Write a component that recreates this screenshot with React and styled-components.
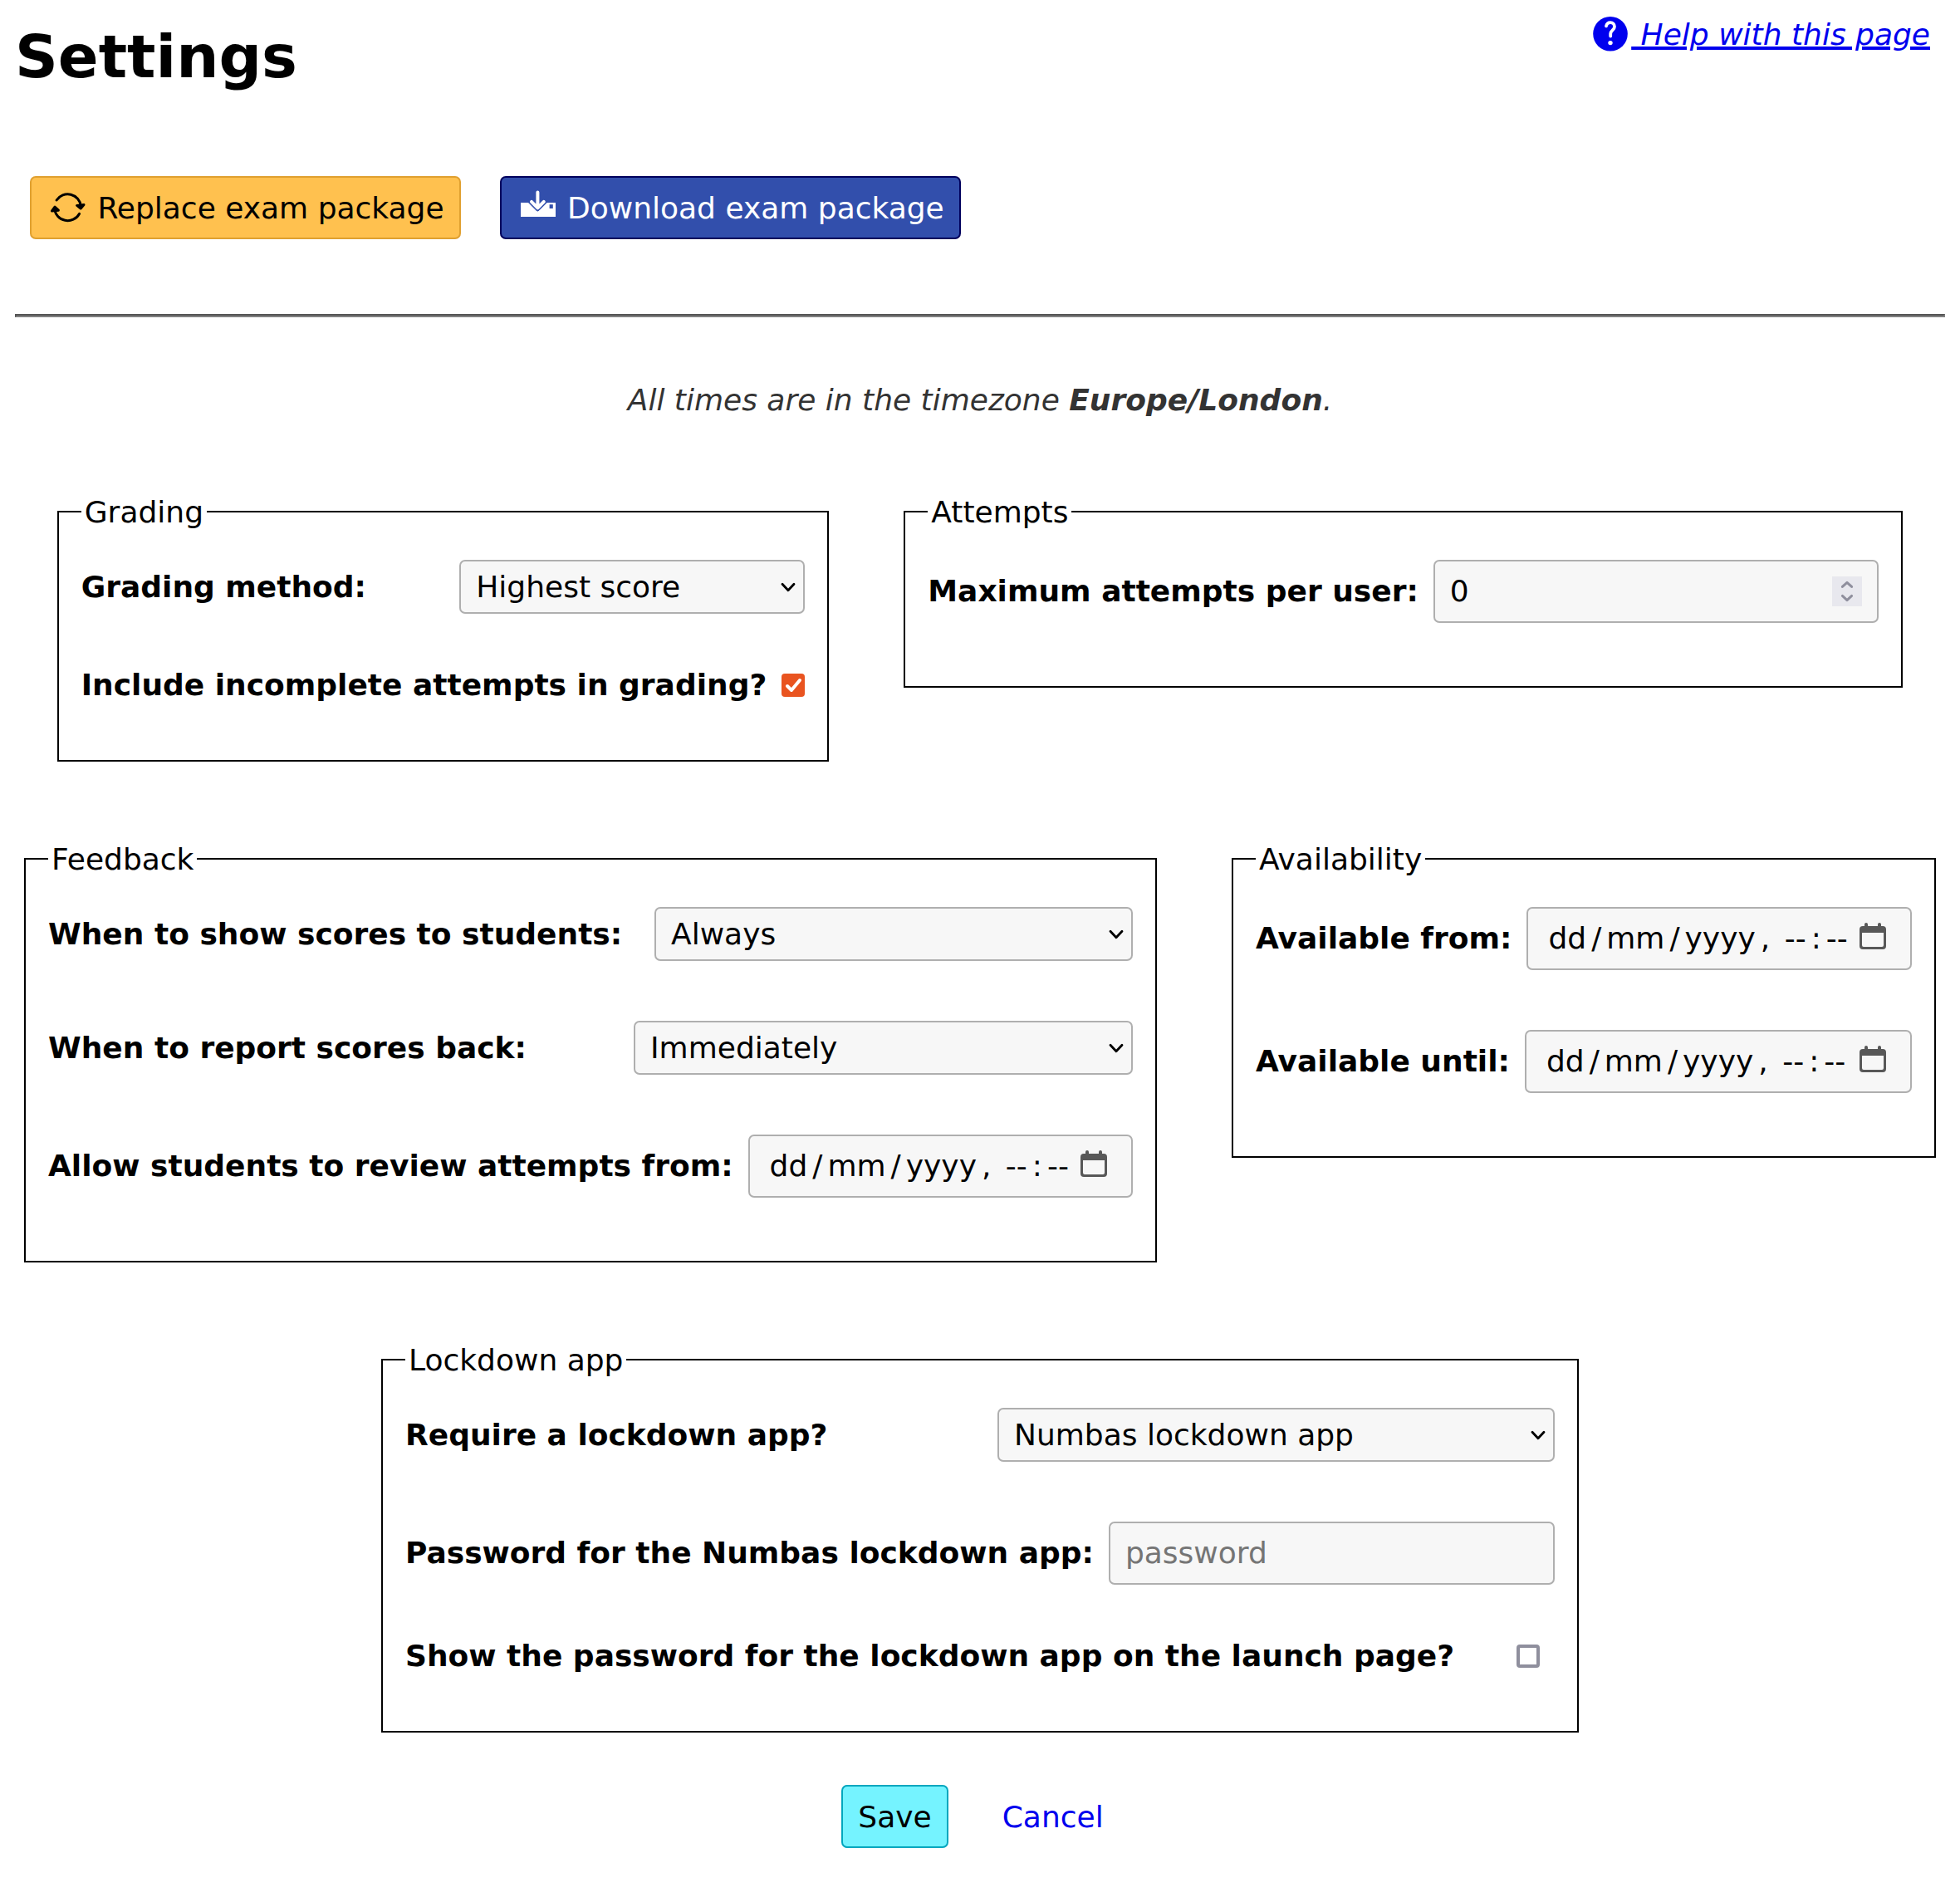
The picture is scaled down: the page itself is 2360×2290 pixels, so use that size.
import React from "react";
import styled, { createGlobalStyle } from "styled-components";

const GlobalStyle = createGlobalStyle`
  body {
    margin: 0;
    background: #fff;
    color: #000;
    font: 36px "DejaVu Sans", Verdana, sans-serif;
    line-height: 42px;
  }
  * { box-sizing: border-box; }
`;

const Page = styled.main`
  width: 2360px;
  height: 2290px;
  padding: 0 18px;
  display: flex;
  flex-direction: column;
`;

const Header = styled.header`
  display: flex;
  justify-content: space-between;
  align-items: flex-start;
  padding-right: 18px;
`;

const Title = styled.h1`
  margin: 26px 0 0;
  font-size: 72px;
  line-height: 84px;
`;

const HelpLink = styled.a`
  margin-top: 20px;
  display: flex;
  align-items: flex-start;
  gap: 4px;
  color: #0000ee;
  font-style: italic;
`;

const HelpText = styled.span`
  padding-top: 1px;
  white-space: pre;
  text-decoration: underline;
  text-decoration-thickness: 4px;
  text-underline-offset: 2px;
`;

const Toolbar = styled.nav`
  display: flex;
  gap: 47px;
  margin: 102px 18px 0;
`;

const tones = {
  warning: { fg: "#000", bg: "#ffc14f", edge: "#e0a030" },
  primary: { fg: "#fff", bg: "#324fac", edge: "#00005c" },
  save: { fg: "#000", bg: "#75f3ff", edge: "#00a6be" },
};

const Button = styled.button`
  height: 76px;
  padding: 1px 18px 0;
  display: flex;
  align-items: center;
  gap: 11.4px;
  font: inherit;
  white-space: nowrap;
  color: ${(p) => tones[p.$tone].fg};
  background: ${(p) => tones[p.$tone].bg};
  border: 2px solid ${(p) => tones[p.$tone].edge};
  border-radius: 7px;
`;

const ButtonIcon = styled.svg`
  display: block;
  width: 50px;
  height: 42px;
  margin-bottom: 1px;
  fill: none;
  stroke-linecap: round;
  stroke-linejoin: round;
`;

const Divider = styled.hr`
  width: 100%;
  height: 4px;
  margin: 90px 0 0;
  border: 2px solid #555;
  border-bottom-color: #808080;
  border-right-color: #808080;
`;

const Timezone = styled.p`
  margin: 79px 0 0;
  text-align: center;
  font-style: italic;
  color: #333;
`;

const Form = styled.form`
  display: flex;
  flex-direction: column;
  gap: 95px;
  margin: 91px -18px 0;
`;

const Group = styled.div`
  display: flex;
  justify-content: center;
  align-items: flex-start;
  gap: 90px;
`;

const Fieldset = styled.fieldset`
  width: ${(p) => p.$width}px;
  margin: 0;
  padding: 36px 27px 76px;
  border: 2px solid #000;
`;

const Legend = styled.legend`
  padding: 2px 4px 0;
`;

const Rows = styled.div`
  display: flex;
  flex-direction: column;
  gap: 72px;
`;

const Row = styled.div`
  display: flex;
  align-items: center;
  justify-content: space-between;
  gap: 18px;
`;

const Label = styled.label`
  font-weight: bold;
  line-height: 28px;
  white-space: nowrap;
`;

const Control = styled.div`
  display: flex;
  align-items: center;
  justify-content: space-between;
  background: #f7f7f7;
  border: 2px solid #afafaf;
  border-radius: 7px;
`;

const SelectBox = styled(Control)`
  width: ${(p) => p.$width}px;
  height: 65px;
  padding: 0 9px 0 18px;
`;

const TextBox = styled(Control)`
  flex: 1;
  min-width: 0;
  height: 76px;
  padding: 0 18px;
`;

const TextInput = styled.input`
  flex: 1;
  min-width: 0;
  padding: 0;
  border: 0;
  outline: 0;
  background: transparent;
  color: #000;
  font: inherit;
  &::placeholder { color: #757575; opacity: 1; }
`;

const Spinner = styled.span`
  width: 36px;
  height: 36px;
  background: #e8e8ee;
  display: flex;
`;

const DateBox = styled(Control)`
  flex: 1;
  height: 76px;
  padding: 0 29px 0 24px;
`;

const DateParts = styled.span`
  display: flex;
  gap: 6px;
  white-space: pre;
`;

const CalendarIcon = styled.svg`
  display: block;
  margin-bottom: 6px;
`;

const Checkbox = styled.span`
  width: 28px;
  height: 28px;
  margin-right: ${(p) => (p.$checked ? 0 : 18)}px;
  display: flex;
  border-radius: 4px;
  background: ${(p) => (p.$checked ? "#e95420" : "#fff")};
  border: ${(p) => (p.$checked ? "0" : "4px solid #8f8f9d")};
`;

const Actions = styled.div`
  display: flex;
  justify-content: center;
  align-items: center;
  gap: 47px;
  margin-top: 63px;
`;

const CancelLink = styled.a`
  padding: 1px 18px 0;
  color: #0000ee;
  text-decoration: none;
`;

const Select = ({ width, children }) => (
  <SelectBox $width={width} role="combobox">
    <span>{children}</span>
    <svg width="18" height="14" viewBox="0 0 18 14" fill="none">
      <path d="M2 3.2 L9 10.8 L16 3.2" stroke="#000" strokeWidth="2.8" strokeLinecap="round" strokeLinejoin="round" />
    </svg>
  </SelectBox>
);

const DateTime = () => (
  <DateBox>
    <DateParts>
      {["dd", "/", "mm", "/", "yyyy", ", ", "--", ":", "--"].map((part, i) => (
        <span key={i}>{part}</span>
      ))}
    </DateParts>
    <CalendarIcon width="32" height="32" viewBox="0 0 32 32">
      <path
        fill="#585858"
        fillRule="evenodd"
        d="M6 4V2a2 2 0 0 1 4 0V4H22V2a2 2 0 0 1 4 0V4H28a4 4 0 0 1 4 4V28a4 4 0 0 1-4 4H4a4 4 0 0 1-4-4V8a4 4 0 0 1 4-4ZM3 12V27a2 2 0 0 0 2 2H27a2 2 0 0 0 2-2V12Z"
      />
    </CalendarIcon>
  </DateBox>
);

const Section = ({ title, width, children }) => (
  <Fieldset $width={width}>
    <Legend>{title}</Legend>
    <Rows>{children}</Rows>
  </Fieldset>
);

const Field = ({ label, children }) => (
  <Row>
    <Label>{label}</Label>
    {children}
  </Row>
);

const HelpIcon = () => (
  <svg width="42" height="42" viewBox="0 0 42 42" fill="none">
    <circle cx="21" cy="20.8" r="20.8" fill="#0000ee" />
    <path d="M16 11.4C16.7 8.3 18.6 7.1 21 7.1C24 7.1 26 9.2 26 12C26 16.2 21.4 16.6 21.2 20.6V23.6" stroke="#fff" strokeWidth="3.8" strokeLinecap="round" />
    <circle cx="21" cy="31.6" r="2.7" fill="#fff" />
  </svg>
);

const ReplaceIcon = () => (
  <ButtonIcon viewBox="0 0 50 42" stroke="#000" strokeWidth="3">
    <path d="M12.1 12A16 16 0 0 1 41.4 19" />
    <path d="M9.6 22.4A16 16 0 0 0 39.5 28.4" />
    <path d="M36.6 18.4L45 17.6L41.2 22Z" fill="#000" />
    <path d="M6.5 25L14.4 24.2L10 20.2Z" fill="#000" />
  </ButtonIcon>
);

const DownloadIcon = () => (
  <ButtonIcon viewBox="0 0 50 42">
    <path d="M5 15H47V32H5Z" fill="#fff" />
    <path d="M13.8 14.2L24 24.4Q25.4 25.8 26.8 24.4L37 14.2Z" fill="#324fac" stroke="#324fac" strokeWidth="1" />
    <path d="M25.4 2.6V20.6M18 13.9L25.4 21.4L32.8 13.9" stroke="#fff" strokeWidth="4" />
    <path d="M39.6 17.2H43.8V22H39.6Z" fill="#324fac" />
  </ButtonIcon>
);

export default function App() {
  return (
    <Page>
      <GlobalStyle />
      <Header>
        <Title>Settings</Title>
        <HelpLink>
          <HelpIcon />
          <HelpText> Help with this page</HelpText>
        </HelpLink>
      </Header>

      <Toolbar>
        <Button $tone="warning">
          <ReplaceIcon />
          Replace exam package
        </Button>
        <Button $tone="primary">
          <DownloadIcon />
          Download exam package
        </Button>
      </Toolbar>

      <Divider />

      <Timezone>
        All times are in the timezone <strong>Europe/London</strong>.
      </Timezone>

      <Form>
        <Group>
          <Section title="Grading" width={929}>
            <Field label="Grading method:">
              <Select width={416}>Highest score</Select>
            </Field>
            <Field label="Include incomplete attempts in grading?">
              <Checkbox $checked role="checkbox">
                <svg width="28" height="28" viewBox="0 0 28 28" fill="none">
                  <path d="M7 15L12 20L22 8" stroke="#fff" strokeWidth="4" strokeLinecap="round" strokeLinejoin="round" />
                </svg>
              </Checkbox>
            </Field>
          </Section>
          <Section title="Attempts" width={1203}>
            <Field label="Maximum attempts per user:">
              <TextBox>
                <TextInput defaultValue="0" />
                <Spinner>
                  <svg width="36" height="36" viewBox="0 0 36 36" fill="none" stroke="#8f8f9d" strokeWidth="3" strokeLinecap="round" strokeLinejoin="round">
                    <path d="M12.4 12.4L18 7.4L23.6 12.4M12.4 23.4L18 28.6L23.6 23.4" />
                  </svg>
                </Spinner>
              </TextBox>
            </Field>
          </Section>
        </Group>

        <Group>
          <Section title="Feedback" width={1364}>
            <Field label="When to show scores to students:">
              <Select width={576}>Always</Select>
            </Field>
            <Field label="When to report scores back:">
              <Select width={601}>Immediately</Select>
            </Field>
            <Field label="Allow students to review attempts from:">
              <DateTime />
            </Field>
          </Section>
          <Section title="Availability" width={848}>
            <Field label="Available from:">
              <DateTime />
            </Field>
            <Field label="Available until:">
              <DateTime />
            </Field>
          </Section>
        </Group>

        <Group>
          <Section title="Lockdown app" width={1442}>
            <Field label="Require a lockdown app?">
              <Select width={671}>Numbas lockdown app</Select>
            </Field>
            <Field label="Password for the Numbas lockdown app:">
              <TextBox>
                <TextInput placeholder="password" />
              </TextBox>
            </Field>
            <Field label="Show the password for the lockdown app on the launch page?">
              <Checkbox role="checkbox" />
            </Field>
          </Section>
        </Group>
      </Form>

      <Actions>
        <Button $tone="save">Save</Button>
        <CancelLink>Cancel</CancelLink>
      </Actions>
    </Page>
  );
}
